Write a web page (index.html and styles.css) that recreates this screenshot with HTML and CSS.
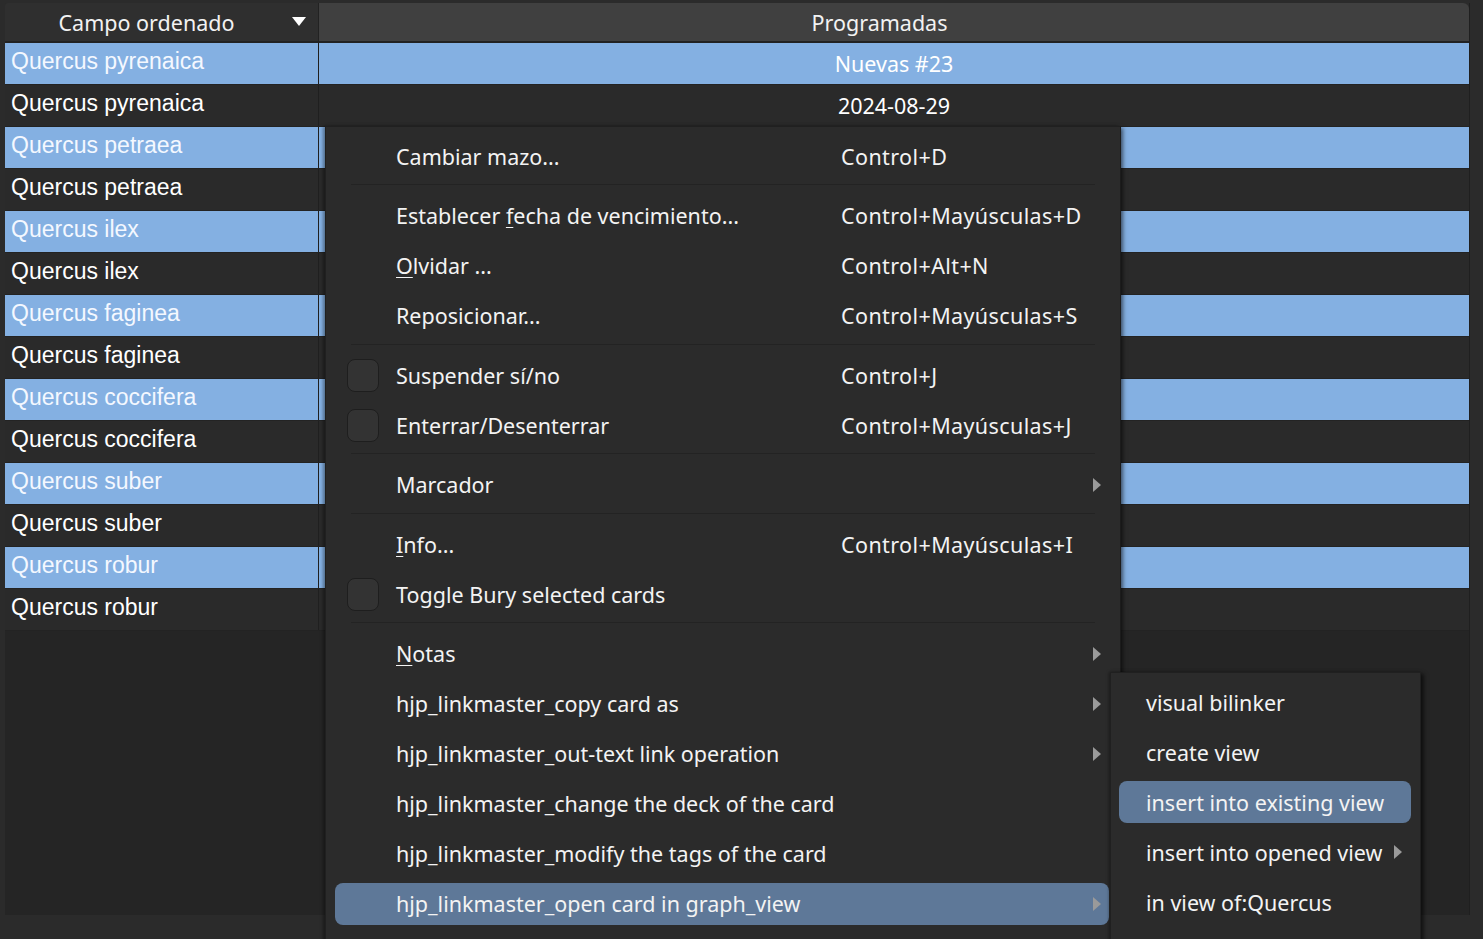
FILE: index.html
```html
<!DOCTYPE html>
<html lang="es">
<head>
<meta charset="utf-8">
<title>Browser</title>
<link rel="stylesheet" href="styles.css">
</head>
<body>
<div class="app">
  <div class="table">
    <div class="thead">
      <div class="th th-sort"><span class="th-label">Campo ordenado</span><span class="sort-arrow"></span></div>
      <div class="th th-prog">Programadas</div>
    </div>
    <div class="row sel"><div class="c1">Quercus pyrenaica</div><div class="c2">Nuevas #23</div></div>
    <div class="row"><div class="c1">Quercus pyrenaica</div><div class="c2">2024-08-29</div></div>
    <div class="row sel"><div class="c1">Quercus petraea</div><div class="c2"></div></div>
    <div class="row"><div class="c1">Quercus petraea</div><div class="c2"></div></div>
    <div class="row sel"><div class="c1">Quercus ilex</div><div class="c2"></div></div>
    <div class="row"><div class="c1">Quercus ilex</div><div class="c2"></div></div>
    <div class="row sel"><div class="c1">Quercus faginea</div><div class="c2"></div></div>
    <div class="row"><div class="c1">Quercus faginea</div><div class="c2"></div></div>
    <div class="row sel"><div class="c1">Quercus coccifera</div><div class="c2"></div></div>
    <div class="row"><div class="c1">Quercus coccifera</div><div class="c2"></div></div>
    <div class="row sel"><div class="c1">Quercus suber</div><div class="c2"></div></div>
    <div class="row"><div class="c1">Quercus suber</div><div class="c2"></div></div>
    <div class="row sel"><div class="c1">Quercus robur</div><div class="c2"></div></div>
    <div class="row"><div class="c1">Quercus robur</div><div class="c2"></div></div>
    <div class="table-empty"></div>
  </div>

  <div class="menu">
    <div class="mi"><span></span><span class="lbl">Cambiar mazo...</span><span class="sc">Control+D</span><span></span></div>
    <div class="sep"></div>
    <div class="mi"><span></span><span class="lbl">Establecer <u>f</u>echa de vencimiento...</span><span class="sc">Control+Mayúsculas+D</span><span></span></div>
    <div class="mi"><span></span><span class="lbl"><u>O</u>lvidar ...</span><span class="sc">Control+Alt+N</span><span></span></div>
    <div class="mi"><span></span><span class="lbl">Reposicionar...</span><span class="sc">Control+Mayúsculas+S</span><span></span></div>
    <div class="sep"></div>
    <div class="mi"><span class="chk"></span><span class="lbl">Suspender sí/no</span><span class="sc">Control+J</span><span></span></div>
    <div class="mi"><span class="chk"></span><span class="lbl">Enterrar/Desenterrar</span><span class="sc">Control+Mayúsculas+J</span><span></span></div>
    <div class="sep"></div>
    <div class="mi"><span></span><span class="lbl">Marcador</span><span class="sc"></span><span class="arr"></span></div>
    <div class="sep"></div>
    <div class="mi"><span></span><span class="lbl"><u>I</u>nfo...</span><span class="sc">Control+Mayúsculas+I</span><span></span></div>
    <div class="mi"><span class="chk"></span><span class="lbl">Toggle Bury selected cards</span><span class="sc"></span><span></span></div>
    <div class="sep"></div>
    <div class="mi"><span></span><span class="lbl"><u>N</u>otas</span><span class="sc"></span><span class="arr"></span></div>
    <div class="mi"><span></span><span class="lbl">hjp_linkmaster_copy card as</span><span class="sc"></span><span class="arr"></span></div>
    <div class="mi"><span></span><span class="lbl">hjp_linkmaster_out-text link operation</span><span class="sc"></span><span class="arr"></span></div>
    <div class="mi"><span></span><span class="lbl wide">hjp_linkmaster_change the deck of the card</span><span></span></div>
    <div class="mi"><span></span><span class="lbl wide">hjp_linkmaster_modify the tags of the card</span><span></span></div>
    <div class="mi hl"><span></span><span class="lbl wide">hjp_linkmaster_open card in graph_view</span><span class="arr"></span></div>
  </div>

  <div class="submenu">
    <div class="smi"><span class="lbl">visual bilinker</span></div>
    <div class="smi"><span class="lbl">create view</span></div>
    <div class="smi hl"><span class="lbl">insert into existing view</span></div>
    <div class="smi"><span class="lbl">insert into opened view</span><span class="arr"></span></div>
    <div class="smi"><span class="lbl">in view of:Quercus</span></div>
  </div>
</div>
</body>
</html>
```

FILE: styles.css
```css
html, body {
  margin: 0;
  padding: 0;
  height: 939px;
  overflow: hidden;
  background: #2b2b2b;
}

.app {
  position: relative;
  height: 939px;
  overflow: hidden;
}

/* ---------- table ---------- */
.table {
  margin: 3px 13px 0 5px;
  display: flex;
  flex-direction: column;
  border-right: 1px solid #1f1f1f;
}

.thead {
  display: flex;
  height: 38px;
  border-bottom: 2px solid #222222;
  font-family: "Noto Sans", sans-serif;
  font-size: 21.5px;
  color: #f2f2f2;
}

.th {
  display: flex;
  align-items: center;
}

.th-sort {
  width: 301px;
  padding-right: 12px;
  background: #2f2f2f;
  border-right: 1px solid #222222;
  border-top-left-radius: 3px;
}

.th-label {
  flex: 1;
  text-align: center;
  padding-right: 4px;
}

.sort-arrow {
  width: 0;
  height: 0;
  border-left: 7px solid transparent;
  border-right: 7px solid transparent;
  border-top: 9px solid #ffffff;
  margin-top: -2px;
}

.th-prog {
  flex: 1;
  justify-content: center;
  padding-right: 29px;
  background: #404040;
  border-top-right-radius: 6px;
}

.row {
  display: flex;
  height: 41px;
  border-bottom: 1px solid #232323;
  background: #2a2a2a;
  color: #ffffff;
}

.row.sel {
  background: #84b0e2;
}

.c1 {
  width: 307px;
  padding-left: 6px;
  border-right: 1px solid #1f1f1f;
  font-family: "Liberation Sans", Arial, sans-serif;
  font-size: 23px;
  line-height: 37px;
  white-space: nowrap;
}

.row.sel .c1 {
  color: #f4f8ff;
}

.c2 {
  flex: 1;
  text-align: center;
  font-family: "Noto Sans", sans-serif;
  font-size: 21.5px;
  line-height: 41px;
}

.table-empty {
  height: 284px;
  background: #252525;
}

/* ---------- context menu ---------- */
.menu {
  position: absolute;
  left: 325px;
  top: 126px;
  width: 795px;
  height: 830px;
  box-sizing: border-box;
  padding-top: 4px;
  display: flex;
  flex-direction: column;
  background: #2b2b2b;
  border-left: 1px solid #202020;
  border-top: 1px solid #202020;
  box-shadow: 1px 0 0 #1c1c1c, 3px 2px 4px rgba(0, 0, 0, 0.55), -2px 0 3px rgba(0, 0, 0, 0.35);
  font-family: "Noto Sans", sans-serif;
  font-size: 21.5px;
  color: #f3f3f3;
}

.mi {
  flex: none;
  display: grid;
  grid-template-columns: 61px 445px 1fr 16px;
  align-items: center;
  height: 42px;
  margin: 4px 11px 4px 9px;
  border-radius: 8px;
  white-space: nowrap;
}

.mi .lbl.wide {
  grid-column: 2 / 4;
}

.mi .sc {
  letter-spacing: 0.4px;
}

.mi.hl {
  background: #5e7898;
}

.mi u {
  text-decoration-thickness: 1px;
  text-underline-offset: 3px;
}

.chk {
  justify-self: start;
  margin-left: 12px;
  width: 32px;
  height: 33px;
  box-sizing: border-box;
  border: 1px solid #1e1e1e;
  border-radius: 8px;
  background: #333333;
}

.arr {
  justify-self: start;
  width: 0;
  height: 0;
  border-top: 7px solid transparent;
  border-bottom: 7px solid transparent;
  border-left: 8px solid #9a9a9a;
}

.sep {
  flex: none;
  height: 1px;
  margin: 3px 25px 5.6px 25px;
  background: #232323;
}

/* ---------- submenu ---------- */
.submenu {
  position: absolute;
  left: 1110px;
  top: 672px;
  width: 311px;
  height: 290px;
  box-sizing: border-box;
  padding-top: 4px;
  display: flex;
  flex-direction: column;
  background: #2b2b2b;
  border: 1px solid #202020;
  box-shadow: 3px 2px 4px rgba(0, 0, 0, 0.55), -1px 0 3px rgba(0, 0, 0, 0.35);
  font-family: "Noto Sans", sans-serif;
  font-size: 21.5px;
  color: #f3f3f3;
}

.smi {
  flex: none;
  display: flex;
  align-items: center;
  height: 42px;
  margin: 4px 9px 4px 8px;
  padding-left: 27px;
  border-radius: 8px;
  white-space: nowrap;
}

.smi.hl {
  background: #5e7898;
}

.smi .arr {
  margin-left: 12px;
}
```
